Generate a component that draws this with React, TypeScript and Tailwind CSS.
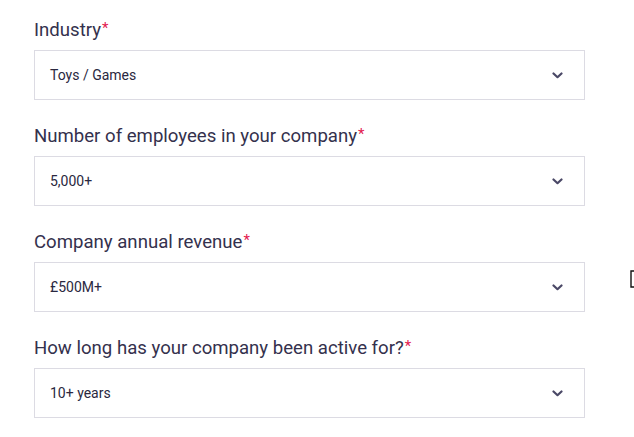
import React from 'react';

const fields = [
  { label: 'Industry', value: 'Toys / Games' },
  { label: 'Number of employees in your company', value: '5,000+' },
  { label: 'Company annual revenue', value: '£500M+' },
  { label: 'How long has your company been active for?', value: '10+ years' },
];

const Chevron = () => (
  <svg width="11" height="7" viewBox="0 0 11 7" fill="none">
    <path d="M1.5 1.5L5.5 5.2L9.5 1.5" stroke="#4a4866" strokeWidth="2.2" strokeLinecap="round" strokeLinejoin="round" />
  </svg>
);

export default function App() {
  return (
    <div className="relative min-h-[437px] bg-white pt-[18px] pl-[34px]" style={{ fontFamily: 'Roboto, sans-serif' }}>
      <div className="w-[551px]">
        {fields.map((f) => (
          <div key={f.label} className="mb-6">
            <label className="mb-2 block h-6 text-[18.6px] leading-6 text-[#34314d]">
              {f.label}
              <span className="relative -top-[2px] ml-[1px] align-top text-[15px] leading-6 text-[#e3174f]">*</span>
            </label>
            <div className="flex h-[50px] items-center justify-between border border-[#dcdbe3] bg-white pl-[15px] pr-[21px]">
              <span className="text-[14px] text-[#2a2840]">{f.value}</span>
              <Chevron />
            </div>
          </div>
        ))}
      </div>
      <svg className="absolute left-[629px] top-[270px]" width="6" height="18" viewBox="0 0 6 18" fill="none">
        <path d="M5 1H2V17H5" stroke="#111" strokeWidth="1.4" />
      </svg>
    </div>
  );
}
